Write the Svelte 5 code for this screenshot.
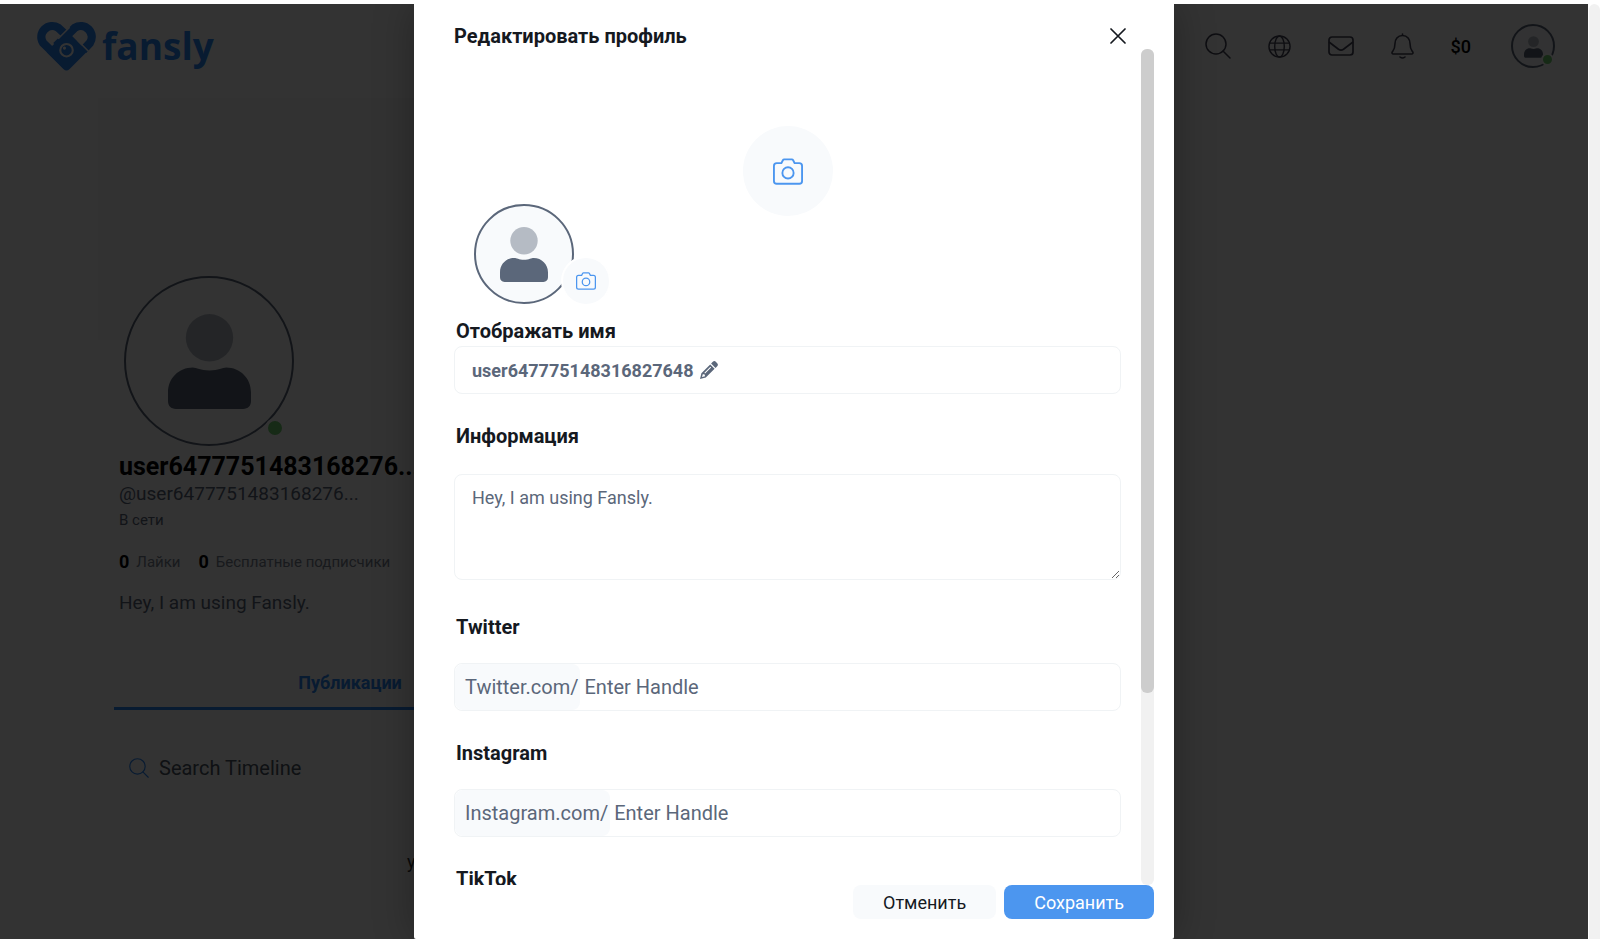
<script>
    const socials = [
        { id: 'twitter', title: 'Twitter', prefix: 'Twitter.com/', hint: 'Enter Handle' },
        { id: 'instagram', title: 'Instagram', prefix: 'Instagram.com/', hint: 'Enter Handle' },
        { id: 'tiktok', title: 'TikTok' }
    ];

    let displayName = $state('user647775148316827648');
    let about = $state('Hey, I am using Fansly.');
    let handles = $state({ twitter: '', instagram: '', tiktok: '' });
</script>

{#snippet person()}
    <svg class="person" viewBox="0 0 84 96" aria-hidden="true">
        <circle class="head" cx="42" cy="24" r="24" />
        <path class="torso" d="M25 54c4 0 8 3 17 3s13-3 17-3c14 0 25 11 25 25v9c0 5-3 8-8 8H8c-5 0-8-3-8-8v-9c0-14 11-25 25-25z" />
    </svg>
{/snippet}

{#snippet camera()}
    <svg class="camera" viewBox="0 0 32 28" fill="none" stroke="currentColor" stroke-width="2" stroke-linejoin="round" aria-hidden="true">
        <path d="M4 5h5l1.500-3q.5-1 1.500-1h8q1 0 1.500 1L23 5h5q3 0 3 3v16q0 3-3 3H4q-3 0-3-3V8q0-3 3-3z" />
        <circle cx="16" cy="15.500" r="6" />
    </svg>
{/snippet}

{#snippet magnifier()}
    <svg class="magnifier" viewBox="0 0 26 26" fill="none" stroke="currentColor" stroke-width="1.500" stroke-linecap="round" aria-hidden="true">
        <circle cx="11" cy="11" r="10" />
        <path d="M18 18l7 7" />
    </svg>
{/snippet}

<div class="window">
    <div class="page">
        <header class="topbar">
            <a class="logo" href="/">
                <svg viewBox="1 2 57 48" aria-hidden="true">
                    <path d="M28 14L22 8.500A10.500 10.500 0 0 0 7.500 23L30 45" fill="none" stroke="currentColor" stroke-width="8" />
                    <path d="M46 30l6.500-7A10.500 10.500 0 0 0 38 8.500L20 26" fill="none" stroke="currentColor" stroke-width="8" />
                    <path d="M14 28L31 12L50 31L33 48q-3 3-6 0L11 32z" fill="currentColor" />
                    <path class="gap" d="M22 19L33 8M41 21l10 10" fill="none" stroke-width="1.500" />
                    <circle class="gap" cx="30" cy="30" r="6" fill="none" stroke-width="2" />
                    <circle class="glint" cx="28" cy="28" r="1.500" />
                </svg>
                <span>fansly</span>
            </a>
            <nav class="actions">
                <button class="icon" aria-label="Поиск">{@render magnifier()}</button>
                <button class="icon" aria-label="Язык">
                    <svg width="23" height="23" viewBox="0 0 24 24" fill="none" stroke="currentColor" stroke-width="1.500">
                        <circle cx="12" cy="12" r="11" />
                        <ellipse cx="12" cy="12" rx="5" ry="11" />
                        <path d="M1.500 8.500h21M1.500 15.500h21" />
                    </svg>
                </button>
                <button class="icon" aria-label="Сообщения">
                    <svg width="26" height="20" viewBox="0 0 26 20" fill="none" stroke="currentColor" stroke-width="1.700">
                        <rect x="1" y="1" width="24" height="18" rx="3" />
                        <path d="M1 6l9.500 7.200q2.500 1.800 5 0L25 6" />
                    </svg>
                </button>
                <button class="icon" aria-label="Уведомления">
                    <svg width="23" height="26" viewBox="0 0 23 26" fill="none" stroke="currentColor" stroke-width="1.600" stroke-linecap="round" stroke-linejoin="round">
                        <path d="M11.500 1v1.500M11.500 2.500c-5 0-7.500 4-7.500 8 0 5-1 6-2.500 8-1 1.300-.5 2.500 1 2.500h18c1.500 0 2-1.200 1-2.500-1.500-2-2.500-3-2.500-8 0-4-2.500-8-7.500-8zM9 24q2.500 2 5 0" />
                    </svg>
                </button>
                <a class="balance" href="/wallet">$0</a>
                <button class="avatar small" aria-label="Профиль">
                    {@render person()}
                    <span class="online"></span>
                </button>
            </nav>
        </header>

        <main class="profile">
            <div class="cover"></div>
            <div class="details">
                <div class="avatar large">
                    {@render person()}
                    <span class="online"></span>
                </div>
                <h1>user6477751483168276...</h1>
                <div class="handle">@user6477751483168276...</div>
                <div class="status">В сети</div>
                <div class="stats">
                    <b>0</b><span>Лайки</span>
                    <b>0</b><span>Бесплатные подписчики</span>
                </div>
                <p class="bio">Hey, I am using Fansly.</p>
            </div>
            <div class="tabs">
                <a class="active" href="#posts">Публикации</a>
            </div>
            <label class="timeline-search">
                {@render magnifier()}
                <input type="text" placeholder="Search Timeline" aria-label="Search Timeline" />
            </label>
            <p class="empty">у</p>
        </main>

        <div class="backdrop">
            <div class="modal" role="dialog" aria-modal="true" aria-labelledby="modal-title">
                <div class="modal-header">
                    <h2 id="modal-title">Редактировать профиль</h2>
                    <button class="close" aria-label="Закрыть">
                        <svg width="16" height="16" viewBox="0 0 16 16" stroke="currentColor" stroke-width="1.700" stroke-linecap="round">
                            <path d="M1 1l14 14M15 1L1 15" />
                        </svg>
                    </button>
                </div>

                <div class="modal-content">
                    <form class="fields" id="profile-form">
                        <div class="banner">
                            <button type="button" class="upload banner-upload" aria-label="Изменить обложку">{@render camera()}</button>
                            <div class="avatar medium">
                                {@render person()}
                                <button type="button" class="upload avatar-upload" aria-label="Изменить аватар">{@render camera()}</button>
                            </div>
                        </div>

                        <label class="title" for="display-name">Отображать имя</label>
                        <div class="box name-box">
                            <input id="display-name" type="text" size="1" bind:value={displayName} />
                            <svg width="18" height="18" viewBox="0 0 18 18" aria-hidden="true">
                                <path fill="currentColor" fill-rule="evenodd" d="M12.800.8a2.200 2.200 0 0 1 3 0l1.400 1.400a2.200 2.200 0 0 1 0 3l-1.700 1.700-4.400-4.400zM10.200 3.400l4.400 4.400-8.800 8.800L0 18l1.400-5.800zM10.400 5.800l-6 6 .7.700 6-6zM2.900 13l-.9 3.100L5 15.200l-.3-1.700-1.500-.2z" />
                            </svg>
                        </div>

                        <label class="title" for="about">Информация</label>
                        <textarea class="about" id="about" bind:value={about}></textarea>

                        {#each socials as s (s.id)}
                            <label class="title" for={s.id}>{s.title}</label>
                            <div class="box">
                                {#if s.prefix}<span class="prefix">{s.prefix}</span>{/if}
                                <input id={s.id} type="text" placeholder={s.hint} bind:value={handles[s.id]} />
                            </div>
                        {/each}
                    </form>
                    <div class="scrollbar"><div class="thumb"></div></div>
                </div>

                <div class="modal-footer">
                    <button class="btn cancel">Отменить</button>
                    <button class="btn save" type="submit" form="profile-form">Сохранить</button>
                </div>
            </div>
        </div>
    </div>
    <div class="page-scroll"></div>
</div>

<style>
    :global(body) { background: #fff; }
    * { box-sizing: border-box; }
    button, input, textarea { font: inherit; color: inherit; }
    button { padding: 0; border: 0; background: none; cursor: pointer; }
    h1, h2, p { margin: 0; }
    a { color: inherit; text-decoration: none; }
    svg { display: block; }

    .window { display: flex; height: 100vh; overflow: hidden; padding-top: 4px; font-family: Roboto, "Noto Sans", sans-serif; color: #5b677a; }
    .page { flex: 1; min-width: 0; position: relative; overflow: hidden; background: #fff; }
    .page-scroll { width: 12px; border-left: 1px solid #fff; background: #f1f1f1; border-radius: 6px 6px 0 0; }

    /* top bar */
    .topbar { display: flex; align-items: center; justify-content: space-between; height: 84px; padding: 0 33px 0 36px; }
    .logo { display: flex; align-items: center; gap: 6px; color: #2a86f5; font: bold 37px/50px "Open Sans", sans-serif; }
    .logo svg { width: 60px; height: 50px; }
    .gap { stroke: #fff; }
    .glint { fill: #fff; }
    .actions { display: flex; align-items: center; }
    .icon { margin-right: 37px; color: #445; }
    .magnifier { width: 26px; height: 26px; }
    .balance { margin-right: 40px; color: #000; font-size: 18px; font-weight: 500; }

    /* avatars */
    .avatar { position: relative; display: flex; justify-content: center; border: 2px solid #5b677a; border-radius: 50%; background: #f8fafc; }
    .head { fill: #b5bbc4; }
    .torso { fill: #5b677a; }
    .small { width: 44px; height: 44px; padding-top: 10px; }
    .small .person { width: 19px; height: 22px; }
    .large { width: 170px; height: 170px; margin-left: 5px; padding-top: 36px; background: #fff; }
    .large .person { width: 83px; height: 95px; }
    .medium { width: 100px; height: 100px; padding-top: 21px; }
    .medium .person { width: 48px; height: 55px; }
    .online { position: absolute; right: 7px; bottom: 6px; width: 20px; height: 20px; border: 3px solid #fff; border-radius: 50%; background: #6fcf6f; }
    .small .online { right: -1px; bottom: 0; width: 13px; height: 13px; border-width: 2px; }

    /* profile page */
    .profile { max-width: 1160px; padding: 10px 0 0 98px; }
    .cover { height: 242px; background: #fafafa; }
    .details { margin-top: -64px; padding-left: 21px; }
    h1 { margin-top: 5px; color: #000; font-size: 25px; line-height: 31px; }
    .handle { color: #5b677a; font-size: 19px; line-height: 24px; }
    .status { margin-top: 4px; color: #5b677a; font-size: 15px; line-height: 20px; }
    .stats { display: flex; align-items: center; margin-top: 20px; color: #7a8290; font-size: 15px; line-height: 24px; }
    .stats b { margin-right: 7px; color: #000; font-size: 18px; }
    .stats span { margin-right: 18px; }
    .bio { margin-top: 17px; color: #5b677a; font-size: 19px; line-height: 24px; }
    .tabs { display: flex; margin: 56px 0 0 16px; border-bottom: 3px solid #2a86f5; }
    .tabs a { width: 472px; padding: 0 0 12px; color: #2a86f5; font-size: 18px; font-weight: bold; line-height: 24px; text-align: center; }
    .timeline-search { display: flex; align-items: center; gap: 10px; height: 48px; margin: 34px 0 0 16px; padding-left: 15px; color: #2a86f5; }
    .timeline-search .magnifier { width: 20px; height: 20px; }
    .timeline-search input { flex: 1; padding: 0; border: 0; background: none; font-size: 20px; }
    .timeline-search input::placeholder { color: #4b5563; opacity: 1; }
    .empty { margin: 58px 0 0 309px; color: #333; font-size: 18px; line-height: 24px; }

    /* modal */
    .backdrop { position: absolute; inset: 0; display: flex; justify-content: center; background: rgba(0, 0, 0, 0.8); }
    .modal { display: flex; flex-direction: column; width: 760px; max-width: 100%; padding: 0 20px 20px 40px; border-radius: 0 0 2px 2px; background: #fff; box-shadow: 0 0 40px rgba(0, 0, 0, 0.3); }
    .modal-header { display: flex; align-items: center; justify-content: space-between; flex-shrink: 0; height: 45px; padding: 18px 28px 0 0; color: #15191f; }
    .modal-header h2 { font-size: 20px; line-height: 28px; }
    .close { color: #15191f; }
    .modal-content { flex: 1; min-height: 0; display: flex; gap: 20px; }
    .fields { flex: 1; min-width: 0; overflow-y: auto; scrollbar-width: none; }
    .scrollbar { width: 13px; border-radius: 6px; background: #f1f1f1; }
    .thumb { height: 77%; border-radius: 6px; background: #cdcdcd; }

    .banner { position: relative; display: flex; align-items: center; justify-content: center; height: 244px; margin-bottom: 26px; }
    .upload { display: flex; align-items: center; justify-content: center; border-radius: 50%; background: #f8fafc; color: #4c96ef; }
    .banner-upload { width: 90px; height: 90px; }
    .banner-upload .camera { width: 30px; height: 27px; }
    .banner .avatar { position: absolute; left: 20px; bottom: -11px; }
    .avatar-upload { position: absolute; right: -39px; bottom: -4px; width: 50px; height: 50px; border: 2px solid #fff; }
    .avatar-upload .camera { width: 20px; height: 18px; }

    .title { display: block; margin: 30px 0 24px 2px; color: #15191f; font-size: 20px; font-weight: bold; line-height: 24px; }
    .banner + .title { margin-top: 0; margin-bottom: 3px; }
    .box { display: flex; align-items: stretch; height: 48px; border: 1px solid #f0f3f5; border-radius: 8px; overflow: hidden; font-size: 20px; }
    .box input { flex: 1; min-width: 0; padding: 0 4px; border: 0; outline: 0; background: none; }
    .box input::placeholder { color: #5b677a; opacity: 1; }
    .prefix { display: flex; align-items: center; padding: 0 2px 0 10px; border-radius: 8px; background: #f8fafc; }
    .name-box { align-items: center; gap: 6px; padding-left: 17px; font-size: 18px; font-weight: bold; }
    .box.name-box input { flex: none; field-sizing: content; padding: 0; }
    .about { display: block; width: 100%; height: 106px; margin: 26px 0 35px; padding: 11px 17px; border: 1px solid #f0f3f5; border-radius: 8px; outline: 0; background: none; font-size: 18px; line-height: 24px; resize: vertical; }

    .modal-footer { display: flex; justify-content: flex-end; gap: 8px; flex-shrink: 0; }
    .btn { height: 34px; border-radius: 8px; font-size: 18px; }
    .cancel { padding: 0 30px; background: #f8fafc; color: #15191f; }
    .save { padding: 0 30px; background: #4c96ef; color: #fff; }
</style>
